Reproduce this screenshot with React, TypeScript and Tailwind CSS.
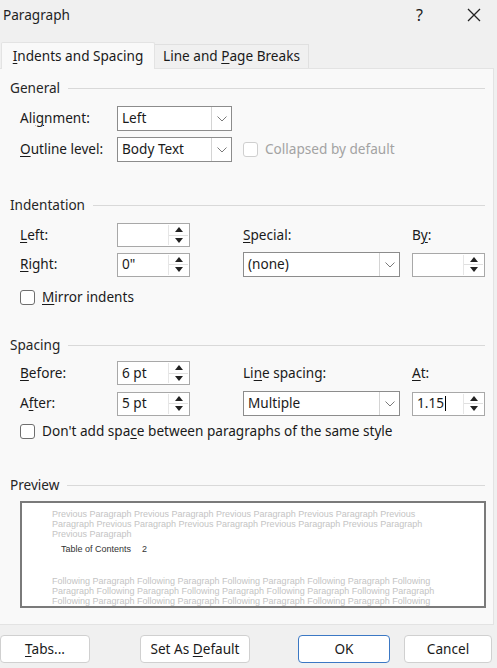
const U = ({ children }: { children: string }) => <span className="underline underline-offset-2">{children}</span>;

const Chevron = () => (
  <svg width="10" height="6" viewBox="0 0 10 6" className="text-[#7a7a7a]">
    <polyline points="0.5,0.5 5,5 9.5,0.5" fill="none" stroke="currentColor" strokeWidth="1" />
  </svg>
);

const Select = ({ value, w }: { value: string; w: string }) => (
  <div className={`flex h-[25px] ${w} items-stretch border border-[#8c8c8c] bg-white`}>
    <div className="flex flex-1 items-center pl-[4px]">{value}</div>
    <div className="flex w-[20px] items-center justify-center border-l border-[#d4d4d4]">
      <Chevron />
    </div>
  </div>
);

const Spin = ({ value, caret }: { value?: string; caret?: boolean }) => (
  <div className="flex h-[24px] w-[73px] items-stretch border border-[#a8a8a8] bg-white">
    <div className="flex flex-1 items-center pl-[4px]">
      {value}
      {caret && <span className="ml-[1px] inline-block h-[15px] w-px bg-black" />}
    </div>
    <div className="m-[1px] flex w-[20px] flex-col border-l border-[#e6e6e6]">
      <div className="flex flex-1 items-center justify-center border-b border-[#e0e0e0]">
        <svg width="8" height="5" viewBox="0 0 8 5"><polygon points="4,0 8,5 0,5" fill="#222" /></svg>
      </div>
      <div className="flex flex-1 items-center justify-center">
        <svg width="8" height="5" viewBox="0 0 8 5"><polygon points="0,0 8,0 4,5" fill="#222" /></svg>
      </div>
    </div>
  </div>
);

const Check = ({ children, disabled }: { children: React.ReactNode; disabled?: boolean }) => (
  <div className={`flex h-[18px] items-center gap-[7px] ${disabled ? 'text-[#a3a3a3]' : ''}`}>
    <div className={`h-[15px] w-[15px] rounded-[3px] border bg-white ${disabled ? 'border-[#cfcfcf]' : 'border-[#6e6e6e]'}`} />
    <span>{children}</span>
  </div>
);

const Header = ({ title }: { title: string }) => (
  <div className="flex h-[18px] items-center gap-[8px] pl-[10px] pr-[8px]">
    <span className="text-[#262626]">{title}</span>
    <div className="h-px flex-1 bg-[#d9d9d9]" />
  </div>
);

const Btn = ({ children, w, primary }: { children: React.ReactNode; w: string; primary?: boolean }) => (
  <div
    className={`flex h-[28px] ${w} items-center justify-center rounded-[4px] border bg-white ${
      primary ? 'border-[#3b78c4] border-[1.5px]' : 'border-[#d0d0d0]'
    }`}
  >
    {children}
  </div>
);

const prev = [
  'Previous Paragraph Previous Paragraph Previous Paragraph Previous Paragraph Previous',
  'Paragraph Previous Paragraph Previous Paragraph Previous Paragraph Previous Paragraph',
  'Previous Paragraph',
];
const follow = [
  'Following Paragraph Following Paragraph Following Paragraph Following Paragraph Following',
  'Paragraph Following Paragraph Following Paragraph Following Paragraph Following Paragraph',
  'Following Paragraph Following Paragraph Following Paragraph Following Paragraph Following',
];

export default function App() {
  return (
    <div className="h-[668px] w-[497px] overflow-hidden bg-[#f0f0f0] text-[13.6px] text-[#1a1a1a]" style={{ fontFamily: '"Noto Sans", "Open Sans", sans-serif' }}>
      {/* title bar */}
      <div className="flex h-[30px] items-center pl-[3px] pr-[16px]">
        <span className="flex-1 text-[13.6px] text-[#1f1f1f]">Paragraph</span>
        <span className="mr-[44px] text-[16px]">?</span>
        <svg width="14" height="14" viewBox="0 0 14 14">
          <path d="M1 1 L13 13 M13 1 L1 13" stroke="#222" strokeWidth="1.3" />
        </svg>
      </div>

      {/* tabs */}
      <div className="mt-[12px] flex h-[26px] items-end pl-[1px]">
        <div className="relative z-10 -mb-px flex h-[27px] w-[154px] items-center justify-center rounded-t-[2px] border border-b-0 border-[#e3e3e3] bg-[#f9f9f9]">
          <span><U>I</U>ndents and Spacing</span>
        </div>
        <div className="flex h-[24px] w-[154px] items-center justify-center border border-b-0 border-l-0 border-[#e0e0e0] bg-[#f0f0f0]">
          <span>Line and <U>P</U>age Breaks</span>
        </div>
      </div>

      {/* panel */}
      <div className="h-[557px] w-[494px] border border-l-0 border-[#e3e3e3] bg-[#f9f9f9] pt-[10px]">
        <Header title="General" />
        <div className="mt-[9px] flex flex-col gap-[6px] pl-[20px]">
          <div className="flex items-center">
            <span className="w-[97px]">Ali<U>g</U>nment:</span>
            <Select value="Left" w="w-[115px]" />
          </div>
          <div className="flex items-center">
            <span className="w-[97px]"><U>O</U>utline level:</span>
            <Select value="Body Text" w="w-[115px]" />
            <div className="ml-[11px]">
              <Check disabled>Collapsed by default</Check>
            </div>
          </div>
        </div>

        <div className="mt-[34px]">
          <Header title="Indentation" />
        </div>
        <div className="mt-[9px] flex flex-col gap-[5px] pl-[20px]">
          <div className="flex items-center">
            <span className="w-[97px]"><U>L</U>eft:</span>
            <Spin />
            <span className="ml-[53px] w-[169px]"><U>S</U>pecial:</span>
            <span>B<U>y</U>:</span>
          </div>
          <div className="flex items-center">
            <span className="w-[97px]"><U>R</U>ight:</span>
            <Spin value="0&quot;" />
            <div className="ml-[53px]">
              <Select value="(none)" w="w-[157px]" />
            </div>
            <div className="ml-[12px]">
              <Spin />
            </div>
          </div>
        </div>
        <div className="mt-[11px] pl-[20px]">
          <Check><U>M</U>irror indents</Check>
        </div>

        <div className="mt-[30px]">
          <Header title="Spacing" />
        </div>
        <div className="mt-[7px] flex flex-col gap-[6px] pl-[20px]">
          <div className="flex items-center">
            <span className="w-[97px]"><U>B</U>efore:</span>
            <Spin value="6 pt" />
            <span className="ml-[53px] w-[169px]">Li<U>n</U>e spacing:</span>
            <span><U>A</U>t:</span>
          </div>
          <div className="flex items-center">
            <span className="w-[97px]">A<U>f</U>ter:</span>
            <Spin value="5 pt" />
            <div className="ml-[53px]">
              <Select value="Multiple" w="w-[157px]" />
            </div>
            <div className="ml-[12px]">
              <Spin value="1.15" caret />
            </div>
          </div>
        </div>
        <div className="mt-[6px] pl-[20px]">
          <Check>Don't add spa<U>c</U>e between paragraphs of the same style</Check>
        </div>

        <div className="mt-[36px]">
          <Header title="Preview" />
        </div>
        <div className="ml-[20px] mt-[7px] h-[107px] w-[466px] overflow-hidden border-2 border-[#7a7a7a] bg-white pl-[30px] pt-[6px] text-[9px] leading-[10px] text-[#c4c4c4]" style={{ fontFamily: '"Liberation Sans", Arial, sans-serif' }}>
          {prev.map((l) => (
            <div key={l + 'p'} className="whitespace-nowrap">{l}</div>
          ))}
          <div className="mt-[5px] flex pl-[9px] text-[#333]">
            <span className="w-[81px]">Table of Contents</span>
            <span>2</span>
          </div>
          <div className="mt-[22px]">
            {follow.map((l, i) => (
              <div key={i} className="whitespace-nowrap">{l}</div>
            ))}
          </div>
        </div>
      </div>

      {/* buttons */}
      <div className="mt-[10px] flex items-center">
        <Btn w="w-[90px]"><span><U>T</U>abs...</span></Btn>
        <div className="ml-[50px]">
          <Btn w="w-[110px]"><span>Set As <U>D</U>efault</span></Btn>
        </div>
        <div className="ml-[48px]">
          <Btn w="w-[92px]" primary>OK</Btn>
        </div>
        <div className="ml-[14px]">
          <Btn w="w-[88px]">Cancel</Btn>
        </div>
      </div>
    </div>
  );
}
